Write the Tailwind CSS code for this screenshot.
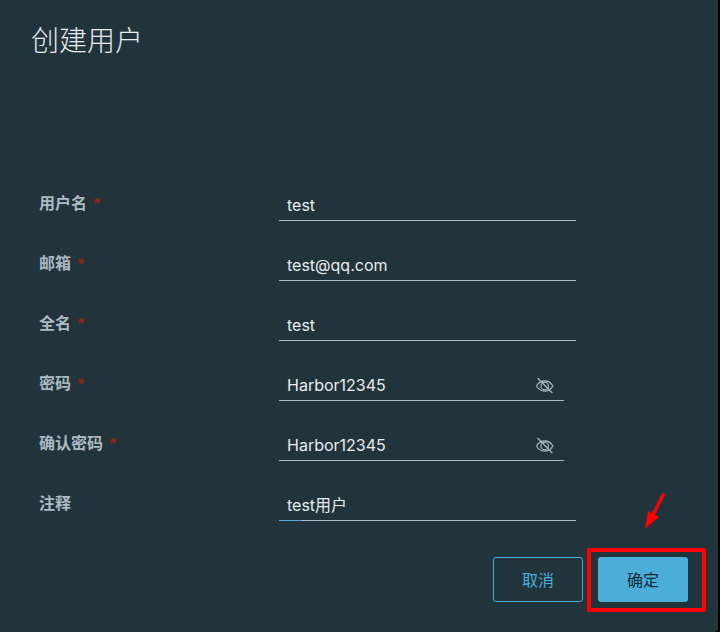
<!DOCTYPE html>
<html><head><meta charset="utf-8"><script src="https://cdn.jsdelivr.net/npm/@tailwindcss/browser@4"></script></head>
<body class="bg-black m-0">
<div class="relative w-[718px] h-[632px] bg-[#21333b] rounded-br-[4px] font-['Inter','Noto_Sans_CJK_SC',sans-serif] overflow-hidden">
  <h1 class="pt-[19px] pl-[31px] h-[186px] text-[28px] leading-[40px] font-light text-[#e9ecef] font-['Noto_Sans_CJK_SC',sans-serif]">创建用户</h1>
  <div class="flex flex-col pl-[39px] pt-[11px] gap-[36px]">
    <div class="flex h-[24px]"><label class="w-[240px] text-[16px] leading-[12px] font-bold text-[#acbac3]">用户名<span class="ml-[6px] text-[14px] text-[#a3200f]">*</span></label><div class="w-[297px] h-[24px] border-b border-[#acbac3] pl-[8px] pr-[8px] text-[16px] leading-[17px] text-[#e9ecef]">test</div></div>
    <div class="flex h-[24px]"><label class="w-[240px] text-[16px] leading-[12px] font-bold text-[#acbac3]">邮箱<span class="ml-[6px] text-[14px] text-[#a3200f]">*</span></label><div class="w-[297px] h-[24px] border-b border-[#acbac3] pl-[8px] pr-[8px] text-[16px] leading-[17px] text-[#e9ecef]">test@qq.com</div></div>
    <div class="flex h-[24px]"><label class="w-[240px] text-[16px] leading-[12px] font-bold text-[#acbac3]">全名<span class="ml-[6px] text-[14px] text-[#a3200f]">*</span></label><div class="w-[297px] h-[24px] border-b border-[#acbac3] pl-[8px] pr-[8px] text-[16px] leading-[17px] text-[#e9ecef]">test</div></div>
    <div class="flex h-[24px]"><label class="w-[240px] text-[16px] leading-[12px] font-bold text-[#acbac3]">密码<span class="ml-[6px] text-[14px] text-[#a3200f]">*</span></label><div class="flex items-start justify-between w-[285px] h-[24px] border-b border-[#acbac3] pl-[8px] pr-[10px] text-[16px] leading-[17px] text-[#e9ecef]"><span>Harbor12345</span>
      <svg class="w-[18px] h-[18px]" viewBox="0 0 18 18" fill="none" stroke="#acbac3" stroke-width="1.2"><path d="M0.5 9C2.6 5.4 5.6 3.8 8.7 3.8S14.8 5.4 16.9 9C14.8 12.6 11.8 14.2 8.7 14.2S2.6 12.6 0.5 9Z"/><circle cx="8.7" cy="9" r="3.8"/><path d="M1.5 1L16.3 16"/></svg></div></div>
    <div class="flex h-[24px]"><label class="w-[240px] text-[16px] leading-[12px] font-bold text-[#acbac3]">确认密码<span class="ml-[6px] text-[14px] text-[#a3200f]">*</span></label><div class="flex items-start justify-between w-[285px] h-[24px] border-b border-[#acbac3] pl-[8px] pr-[10px] text-[16px] leading-[17px] text-[#e9ecef]"><span>Harbor12345</span>
      <svg class="w-[18px] h-[18px]" viewBox="0 0 18 18" fill="none" stroke="#acbac3" stroke-width="1.2"><path d="M0.5 9C2.6 5.4 5.6 3.8 8.7 3.8S14.8 5.4 16.9 9C14.8 12.6 11.8 14.2 8.7 14.2S2.6 12.6 0.5 9Z"/><circle cx="8.7" cy="9" r="3.8"/><path d="M1.5 1L16.3 16"/></svg></div></div>
    <div class="flex h-[24px]"><label class="w-[240px] text-[16px] leading-[12px] font-bold text-[#acbac3]">注释</label><div class="relative w-[297px] h-[24px] border-b border-[#acbac3] pl-[8px] pr-[8px] text-[16px] leading-[17px] text-[#e9ecef]">test用户<span class="absolute left-0 bottom-[-1px] w-[23px] h-[1px] bg-[#4aaed9]"></span></div></div>
  </div>
  <div class="flex justify-end gap-[15px] pr-[30px] pt-[36px]">
    <button class="w-[90px] h-[45px] pb-[2px] rounded-[3px] border border-[#4aaed9] text-[#4aaed9] text-[16px] font-['Noto_Sans_CJK_SC',sans-serif]">取消</button>
    <button class="w-[90px] h-[45px] pb-[2px] rounded-[3px] bg-[#4aaed9] text-[#0e2733] text-[16px] font-['Noto_Sans_CJK_SC',sans-serif]">确定</button>
  </div>
  <div class="absolute left-[587px] top-[548px] w-[119px] h-[64px] border-[4px] border-[#fe0000] rounded-[2px]"></div>
  <svg class="absolute left-[640px] top-[490px]" width="30" height="42" viewBox="0 0 30 42"><path d="M23 5L14 23" stroke="#fe0000" stroke-width="3.5" stroke-linecap="round"/><path d="M5 39L8 21L19 27Z" fill="#fe0000"/></svg>
</div>
</body></html>
